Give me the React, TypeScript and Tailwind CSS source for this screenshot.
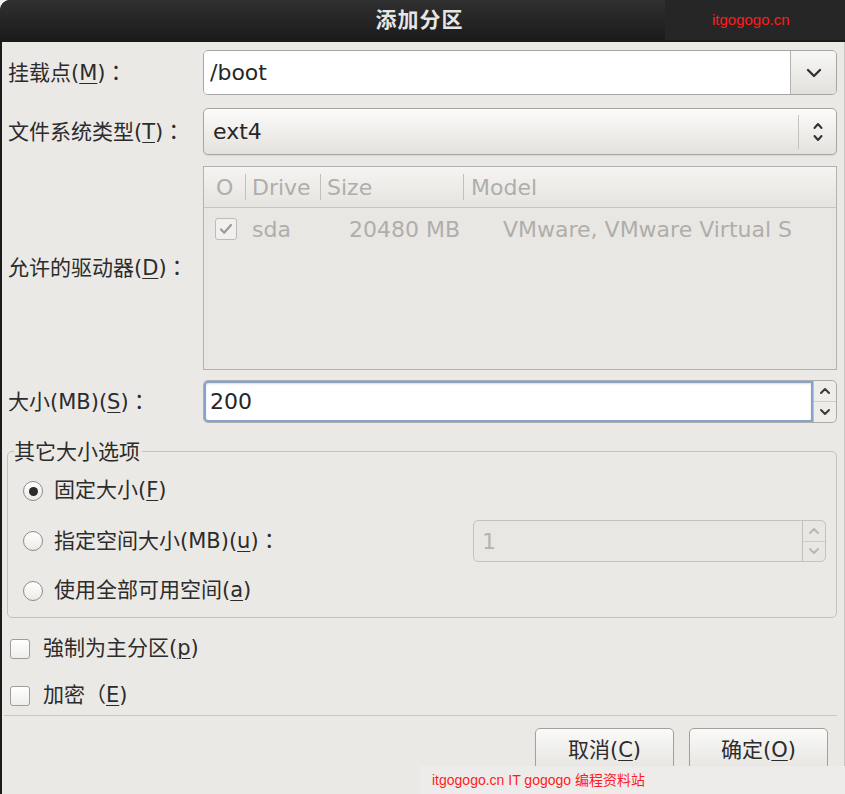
import type { ReactNode } from 'react';

const FONT = { fontFamily: '"DejaVu Sans", "Noto Sans CJK SC", sans-serif' };
const MARK = { fontFamily: '"Liberation Sans", "Noto Sans CJK SC", sans-serif' };
const CJK = { fontFamily: '"Noto Sans CJK TC", sans-serif' };

function Key({ children }: { children: ReactNode }) {
  return <span className="underline underline-offset-[3px] decoration-1">{children}</span>;
}

function Colon() {
  return <span style={CJK}>：</span>;
}

function ChevronDown({ className = '' }: { className?: string }) {
  return (
    <svg width="16" height="10" viewBox="0 0 16 10" className={className} fill="none">
      <path d="M2 2l6 6 6-6" stroke="currentColor" strokeWidth="2.4" strokeLinecap="round" strokeLinejoin="round" />
    </svg>
  );
}

function UpDown({ className = '' }: { className?: string }) {
  return (
    <svg width="12" height="24" viewBox="0 0 12 24" className={className} fill="none">
      <path d="M2.5 8l3.5-4 3.5 4" stroke="currentColor" strokeWidth="2" strokeLinecap="round" strokeLinejoin="round" />
      <path d="M2.5 16l3.5 4 3.5-4" stroke="currentColor" strokeWidth="2" strokeLinecap="round" strokeLinejoin="round" />
    </svg>
  );
}

function SpinButtons({ disabled = false }: { disabled?: boolean }) {
  const c = disabled ? 'text-[#b9b7b3]' : 'text-[#3a3a3a]';
  return (
    <div className={`w-[23px] flex flex-col border-l border-[#c2c0bc] ${c}`}>
      <div className="flex-1 flex items-center justify-center border-b border-[#cfcdc9]">
        <svg width="12" height="8" viewBox="0 0 12 8" fill="none">
          <path d="M2 6l4-4 4 4" stroke="currentColor" strokeWidth="2" strokeLinecap="round" strokeLinejoin="round" />
        </svg>
      </div>
      <div className="flex-1 flex items-center justify-center">
        <svg width="12" height="8" viewBox="0 0 12 8" fill="none">
          <path d="M2 2l4 4 4-4" stroke="currentColor" strokeWidth="2" strokeLinecap="round" strokeLinejoin="round" />
        </svg>
      </div>
    </div>
  );
}

function Radio({ checked = false }: { checked?: boolean }) {
  return (
    <span className="w-[20px] h-[20px] rounded-full border border-[#8d8b87] bg-gradient-to-b from-[#ffffff] to-[#ecebe8] flex items-center justify-center shrink-0">
      {checked && <span className="w-[9px] h-[9px] rounded-full bg-[#2b2b2b]" />}
    </span>
  );
}

function Check() {
  return <span className="w-[20px] h-[20px] rounded-[3px] border border-[#9f9d99] bg-gradient-to-b from-[#ffffff] to-[#efeeeb] shrink-0" />;
}

function Label({ children }: { children: ReactNode }) {
  return <div className="w-[195px] shrink-0 flex items-center text-[#2c2c2c]">{children}</div>;
}

export default function App() {
  return (
    <div className="relative w-[845px] h-[794px] overflow-hidden bg-[#f2f2f2] text-[21px]" style={FONT}>
      <div className="h-full flex flex-col rounded-tl-[10px] overflow-hidden bg-[#1c1c1c]">
        {/* title bar */}
        <div className="h-[42px] shrink-0 bg-gradient-to-b from-[#303030] to-[#1a1a1a] flex items-center justify-center">
          <span className="text-[#e6e6e6] font-bold text-[21px] tracking-[1px] -ml-[6px]">添加分区</span>
        </div>

        {/* body */}
        <div className="flex-1 ml-[2px] bg-[#ebe9e5] border-r border-[#cac8c4] pl-[6px] pr-[7px] flex flex-col">
          {/* mount point */}
          <div className="mt-[8px] h-[45px] flex">
            <Label>
              <span>挂载点(<Key>M</Key>)<Colon /></span>
            </Label>
            <div className="flex-1 flex rounded-[5px] border border-[#a8a6a2] overflow-hidden shadow-[inset_0_1px_2px_rgba(0,0,0,0.12)]">
              <div className="flex-1 bg-white flex items-center pl-[6px] text-[22px] text-[#262626]">/boot</div>
              <div className="w-[46px] border-l border-[#b5b3af] bg-gradient-to-b from-[#f7f7f6] to-[#e3e1dd] flex items-center justify-center text-[#333]">
                <ChevronDown />
              </div>
            </div>
          </div>

          {/* fs type */}
          <div className="mt-[13px] h-[47px] flex">
            <Label>
              <span>文件系统类型(<Key>T</Key>)<Colon /></span>
            </Label>
            <div className="flex-1 flex items-center rounded-[5px] border border-[#a8a6a2] bg-gradient-to-b from-[#fbfbfa] to-[#e4e2de] shadow-[0_1px_1px_rgba(0,0,0,0.08)]">
              <span className="flex-1 pl-[9px] text-[22px] text-[#262626]">ext4</span>
              <span className="w-px h-[34px] bg-[#c4c2be]" />
              <span className="w-[37px] flex items-center justify-center text-[#333]">
                <UpDown />
              </span>
            </div>
          </div>

          {/* drives */}
          <div className="mt-[11px] h-[204px] flex">
            <Label>
              <span>允许的驱动器(<Key>D</Key>)<Colon /></span>
            </Label>
            <div className="flex-1 flex flex-col border border-[#b4b2ae] bg-[#e9e7e3] text-[22px] text-[#b0aeab]">
              <div className="h-[41px] flex items-center border-b border-[#c7c5c1] bg-gradient-to-b from-[#f5f4f2] to-[#e6e4e0]">
                <span className="w-[41px] pl-[12px]">O</span>
                <span className="w-px h-[26px] bg-[#c2c0bc]" />
                <span className="w-[74px] pl-[6px]">Drive</span>
                <span className="w-px h-[26px] bg-[#c2c0bc]" />
                <span className="w-[142px] pl-[6px]">Size</span>
                <span className="w-px h-[26px] bg-[#c2c0bc]" />
                <span className="pl-[7px]">Model</span>
              </div>
              <div className="h-[42px] flex items-center">
                <span className="w-[48px] pl-[11px]">
                  <span className="w-[22px] h-[22px] rounded-[3px] border border-[#bdbbb7] bg-[#f1f0ee] flex items-center justify-center">
                    <svg width="14" height="14" viewBox="0 0 14 14" fill="none">
                      <path d="M2 7.5l3.2 3.2L12 3" stroke="#9b9996" strokeWidth="2.2" strokeLinecap="round" strokeLinejoin="round" />
                    </svg>
                  </span>
                </span>
                <span className="w-[97px]">sda</span>
                <span className="w-[154px]">20480 MB</span>
                <span className="whitespace-nowrap">VMware, VMware Virtual S</span>
              </div>
            </div>
          </div>

          {/* size */}
          <div className="mt-[10px] h-[43px] flex">
            <Label>
              <span>大小(MB)(<Key>S</Key>)<Colon /></span>
            </Label>
            <div className="flex-1 flex rounded-[5px] border border-[#aeacaa] bg-[#eeedea]">
              <div className="flex-1 bg-white rounded-l-[4px] border-2 border-[#86a3c9] flex items-center pl-[4px] text-[22px] text-[#262626] shadow-[inset_0_1px_2px_rgba(60,90,140,0.2)]">
                200
              </div>
              <SpinButtons />
            </div>
          </div>

          {/* other size options */}
          <div className="relative mt-[28px] -ml-[1px] h-[167px] rounded-[5px] border border-[#c4c2be] pl-[15px] pt-[14px] flex flex-col">
            <span className="absolute -top-[15px] left-[6px] bg-[#ebe9e5] pr-[2px] text-[#2c2c2c]">其它大小选项</span>
            <div className="h-[50px] flex items-center gap-[11px] text-[#2c2c2c]">
              <Radio checked />
              <span>固定大小(<Key>F</Key>)</span>
            </div>
            <div className="h-[50px] flex items-center gap-[11px] text-[#2c2c2c]">
              <Radio />
              <span>指定空间大小(MB)(<Key>u</Key>)<Colon /></span>
              <div className="ml-auto mr-[10px] w-[353px] h-[42px] flex rounded-[5px] border border-[#c4c2be] bg-[#e9e7e3] overflow-hidden">
                <span className="flex-1 flex items-center pl-[8px] text-[22px] text-[#b5b3b0]">1</span>
                <SpinButtons disabled />
              </div>
            </div>
            <div className="h-[50px] flex items-center gap-[11px] text-[#2c2c2c]">
              <Radio />
              <span>使用全部可用空间(<Key>a</Key>)</span>
            </div>
          </div>

          {/* checkboxes */}
          <div className="mt-[21px] h-[20px] ml-[2px] flex items-center gap-[13px] text-[#2c2c2c]">
            <Check />
            <span>強制为主分区(<Key>p</Key>)</span>
          </div>
          <div className="mt-[27px] h-[20px] ml-[2px] flex items-center gap-[13px] text-[#2c2c2c]">
            <Check />
            <span>加密（<Key>E</Key>)</span>
          </div>

          <div className="mt-[9px] -ml-[4px] h-px bg-[#c9c7c3]" />

          {/* buttons */}
          <div className="mt-[12px] flex justify-end gap-[15px] pr-[9px]">
            <button className="w-[139px] h-[46px] rounded-[5px] border border-[#a3a19d] bg-gradient-to-b from-[#fafaf9] to-[#e5e3df] text-[#2c2c2c] shadow-[0_1px_1px_rgba(0,0,0,0.1)]">
              取消(<Key>C</Key>)
            </button>
            <button className="w-[139px] h-[46px] rounded-[5px] border border-[#a3a19d] bg-gradient-to-b from-[#fafaf9] to-[#e5e3df] text-[#2c2c2c] shadow-[0_1px_1px_rgba(0,0,0,0.1)]">
              确定(<Key>O</Key>)
            </button>
          </div>
        </div>
      </div>

      {/* watermarks */}
      <div className="absolute top-0 right-0 w-[180px] h-[40px] bg-[#262626] flex items-center pl-[47px] text-[15px] text-[#ff1c1c]" style={MARK}>
        itgogogo.cn
      </div>
      <div className="absolute bottom-0 right-0 w-[425px] h-[28px] bg-[#edecea] flex items-center pl-[12px] text-[14px] text-[#ff1c1c]" style={MARK}>
        itgogogo.cn IT gogogo 编程资料站
      </div>
    </div>
  );
}
